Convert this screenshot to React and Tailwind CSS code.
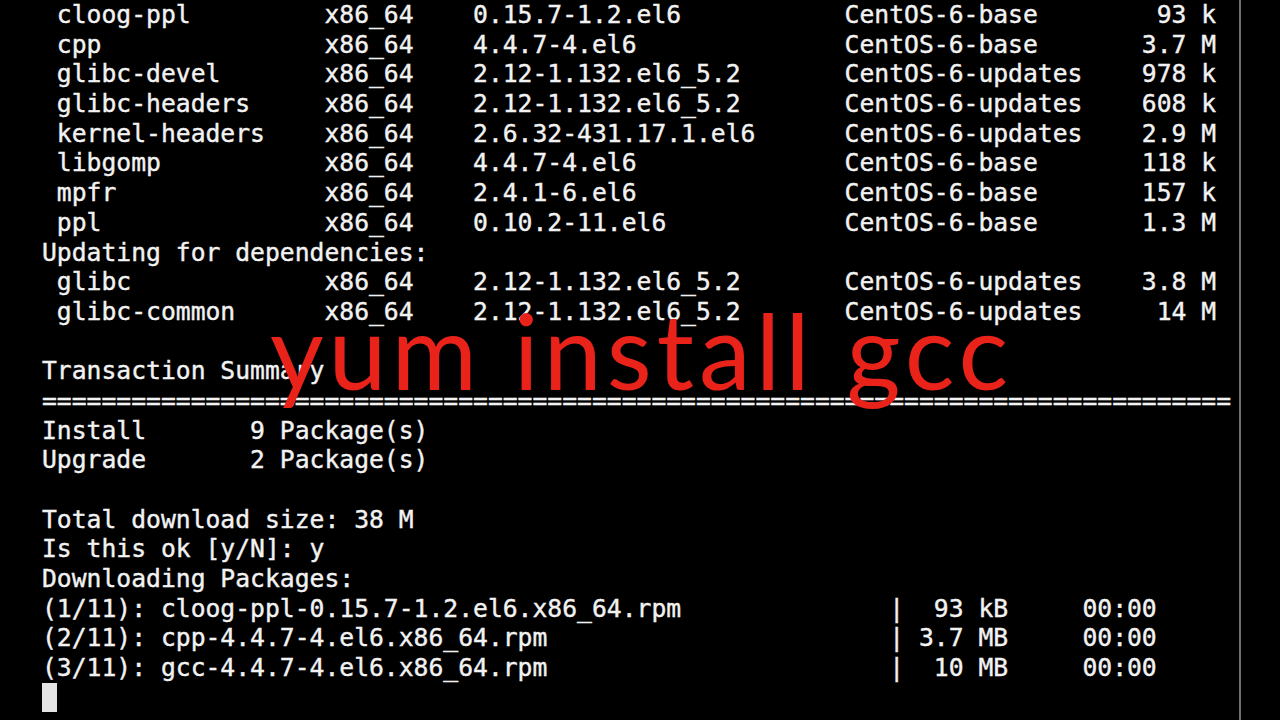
const pkg = (name, arch, ver, repo, size) => {
  const left = (' ' + name.padEnd(18) + arch.padEnd(10) + ver).padEnd(54) + repo
  return left.padEnd(79 - size.length) + size
}

const dl = (label, size) => label.padEnd(57) + '| ' + size.padStart(6) + '     00:00'

const lines = [
  pkg('cloog-ppl', 'x86_64', '0.15.7-1.2.el6', 'CentOS-6-base', '93 k'),
  pkg('cpp', 'x86_64', '4.4.7-4.el6', 'CentOS-6-base', '3.7 M'),
  pkg('glibc-devel', 'x86_64', '2.12-1.132.el6_5.2', 'CentOS-6-updates', '978 k'),
  pkg('glibc-headers', 'x86_64', '2.12-1.132.el6_5.2', 'CentOS-6-updates', '608 k'),
  pkg('kernel-headers', 'x86_64', '2.6.32-431.17.1.el6', 'CentOS-6-updates', '2.9 M'),
  pkg('libgomp', 'x86_64', '4.4.7-4.el6', 'CentOS-6-base', '118 k'),
  pkg('mpfr', 'x86_64', '2.4.1-6.el6', 'CentOS-6-base', '157 k'),
  pkg('ppl', 'x86_64', '0.10.2-11.el6', 'CentOS-6-base', '1.3 M'),
  'Updating for dependencies:',
  pkg('glibc', 'x86_64', '2.12-1.132.el6_5.2', 'CentOS-6-updates', '3.8 M'),
  pkg('glibc-common', 'x86_64', '2.12-1.132.el6_5.2', 'CentOS-6-updates', '14 M'),
  '',
  'Transaction Summary',
  '='.repeat(80),
  'Install       9 Package(s)',
  'Upgrade       2 Package(s)',
  '',
  'Total download size: 38 M',
  'Is this ok [y/N]: y',
  'Downloading Packages:',
  dl('(1/11): cloog-ppl-0.15.7-1.2.el6.x86_64.rpm', '93 kB'),
  dl('(2/11): cpp-4.4.7-4.el6.x86_64.rpm', '3.7 MB'),
  dl('(3/11): gcc-4.4.7-4.el6.x86_64.rpm', '10 MB'),
]

export default function App() {
  return (
    <div className="relative w-[1280px] h-[720px] overflow-hidden bg-black flex">
      {/* terminal */}
      <div className="w-[1241px] h-full border-r-2 border-[#6e6e6e] pl-[42px] font-['DejaVu_Sans_Mono',monospace] text-[24.7px] leading-[29.7px] text-[#f2f2f2] [-webkit-text-stroke:0.4px_#f2f2f2] whitespace-pre">
        {lines.map((line, i) => (
          <div key={i} className="h-[29.7px]">{line}</div>
        ))}
        <div className="h-[29.7px] flex items-center">
          <span className="w-[15px] h-[29px] bg-[#e4e4e4]" />
        </div>
      </div>

      {/* overlay caption */}
      <div className="absolute left-[270px] top-[298px] font-['Lato',sans-serif] text-[104px] leading-none tracking-[5px] text-[#e9231a] whitespace-nowrap">
        yum install gcc
      </div>
    </div>
  )
}
